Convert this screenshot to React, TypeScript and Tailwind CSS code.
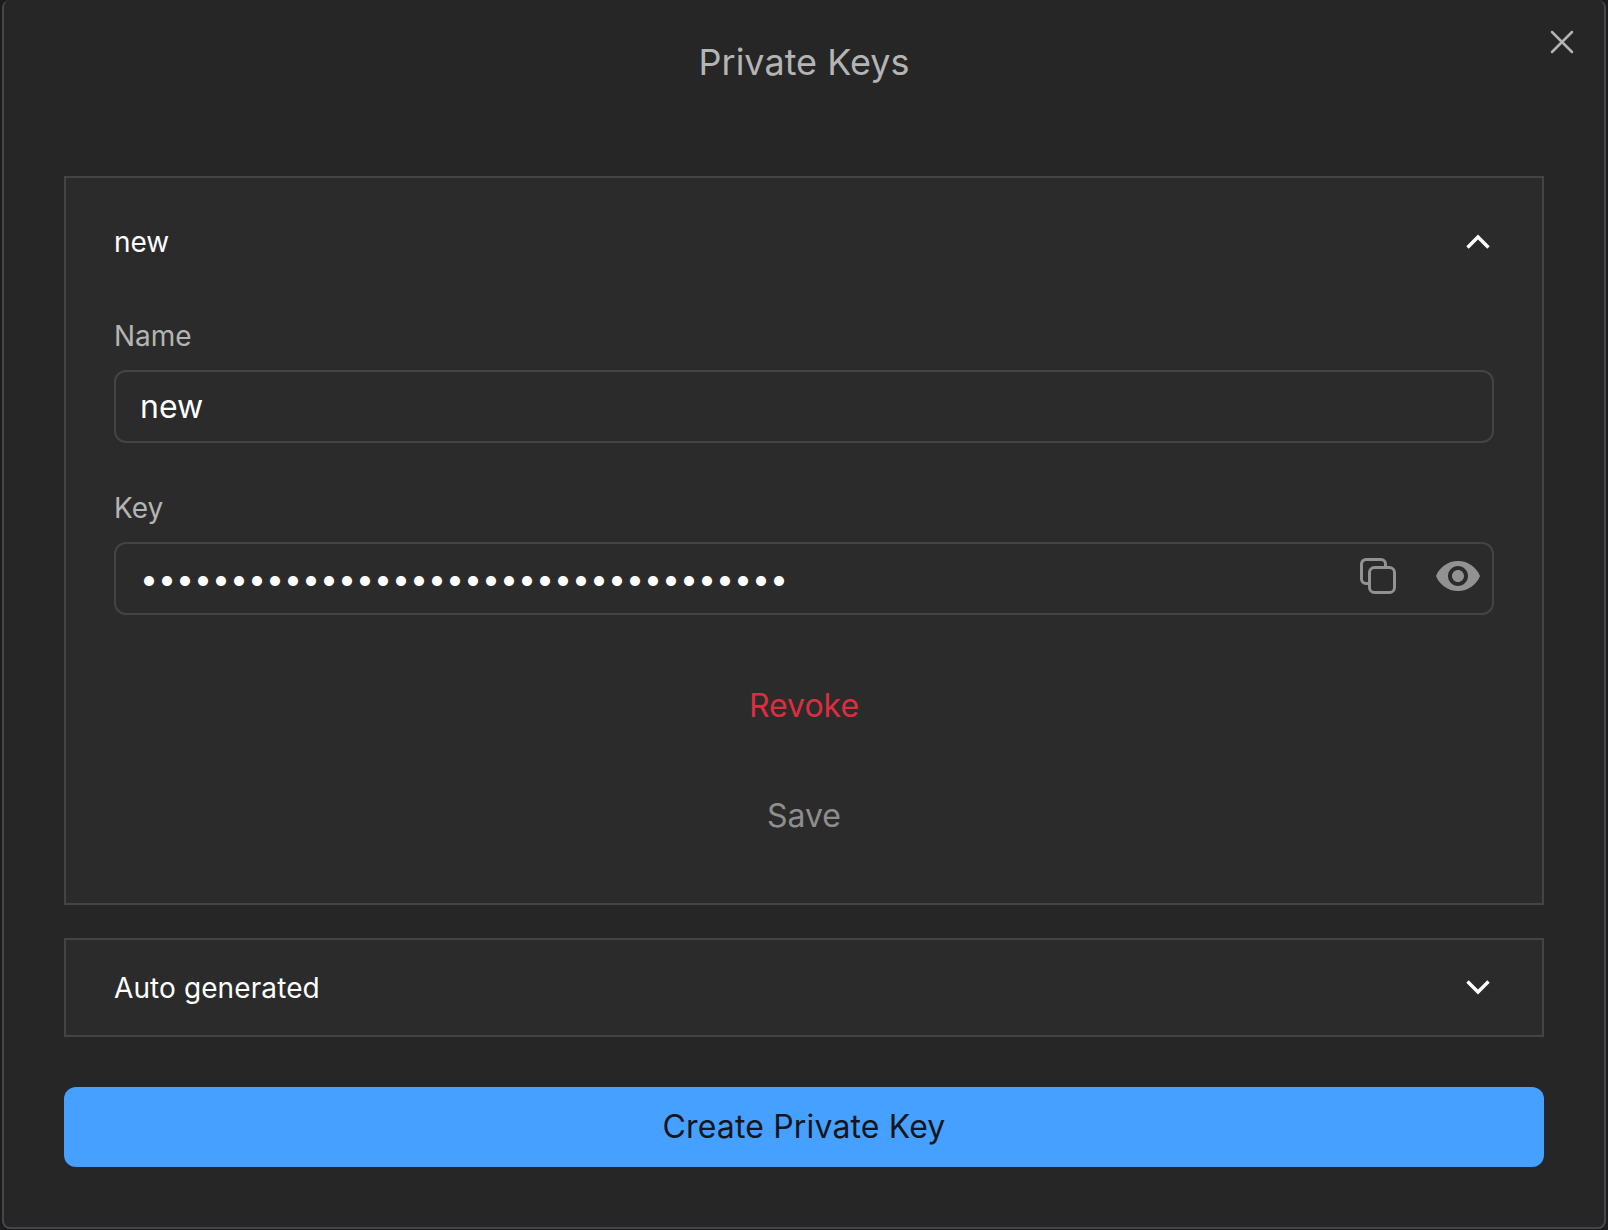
import { X } from 'lucide-react'

function Chevron({ up }: { up?: boolean }) {
  return (
    <svg width="24" height="16" viewBox="0 0 24 16" fill="none" stroke="#ffffff" strokeWidth="3.4" className={up ? 'mr-[4px]' : 'mr-[4px] mt-[-1px]'}>
      <path d={up ? 'M1.5 13.5 L12 3 L22.5 13.5' : 'M1.5 2.5 L12 13 L22.5 2.5'} />
    </svg>
  )
}

function CopyIcon() {
  return (
    <svg width="36" height="36" viewBox="0 0 36 36" fill="none" stroke="#929292" strokeWidth="3">
      <path d="M25.5 8 V6 A4.5 4.5 0 0 0 21 1.5 H6 A4.5 4.5 0 0 0 1.5 6 V21 A4.5 4.5 0 0 0 6 25.5 H8" />
      <rect x="9.5" y="9.5" width="25" height="25" rx="5" />
    </svg>
  )
}

function EyeIcon() {
  return (
    <svg width="48" height="48" viewBox="0 0 24 24" fill="#929292">
      <path d="M12 4.5C7 4.5 2.73 7.61 1 12c1.73 4.39 6 7.5 11 7.5s9.27-3.11 11-7.5c-1.73-4.39-6-7.5-11-7.5zM12 17c-2.76 0-5-2.24-5-5s2.24-5 5-5 5 2.24 5 5-2.24 5-5 5zm0-8c-1.66 0-3 1.34-3 3s1.34 3 3 3 3-1.34 3-3-1.34-3-3-3z" />
    </svg>
  )
}

export default function App() {
  return (
    <div className="w-[1608px] h-[1230px] bg-[#1c1c1f] px-[2px] pb-[1px] font-['Inter',sans-serif] overflow-hidden">
      <div className="relative h-full bg-[#262626] border-2 border-t-0 border-[#46464a] rounded-[8px] px-[60px]">
        <button className="absolute right-[22px] top-[22px] text-[#b4b4b4]">
          <X size={40} strokeWidth={1.5} />
        </button>
        <h1 className="h-[176px] pt-[38px] text-center text-[36px] leading-[48px] text-[#b4b4b4]">Private Keys</h1>

        <section className="h-[729px] bg-[#2b2b2b] border-2 border-[#444444] px-[48px]">
          <div className="flex items-center justify-between h-[128px]">
            <span className="text-[28px] text-white">new</span>
            <Chevron up />
          </div>

          <label className="block text-[28px] leading-[36px] text-[#b4b4b4] mt-[12px] mb-[16px]">Name</label>
          <input
            readOnly
            value="new"
            className="block w-full h-[73px] bg-transparent border-2 border-[#444444] rounded-[12px] px-[24px] text-[32px] text-white outline-none"
          />

          <label className="block text-[28px] leading-[36px] text-[#b4b4b4] mt-[47px] mb-[16px]">Key</label>
          <div className="relative">
            <input
              readOnly
              type="password"
              value="abcdefghijklmnopqrstuvwxyz0123456789"
              className="block w-full h-[73px] bg-transparent border-2 border-[#444444] rounded-[12px] px-[24px] text-[32px] text-white outline-none"
            />
            <div className="absolute right-[12px] top-[10px] flex items-center gap-[38px]">
              <CopyIcon />
              <EyeIcon />
            </div>
          </div>

          <div className="flex flex-col items-center">
            <button className="mt-[69px] text-[32px] leading-[44px] text-[#dc2e3f]">Revoke</button>
            <button className="mt-[66px] text-[32px] leading-[44px] text-[#8e8e8e]">Save</button>
          </div>
        </section>

        <section className="flex items-center justify-between h-[99px] mt-[33px] bg-[#2b2b2b] border-2 border-[#444444] px-[48px]">
          <span className="text-[28px] tracking-[0.1px] text-white">Auto generated</span>
          <Chevron />
        </section>

        <button className="block w-full h-[80px] mt-[50px] bg-[#46a0ff] rounded-[12px] text-[32px] tracking-[0.15px] text-[#14161a]">Create Private Key</button>
      </div>
    </div>
  )
}
